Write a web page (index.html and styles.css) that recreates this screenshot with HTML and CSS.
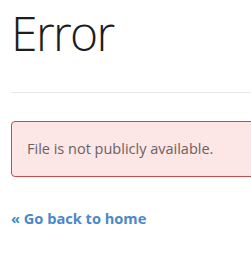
FILE: index.html
```html
<!DOCTYPE html>
<html>
<head>
<meta charset="utf-8">
<link rel="stylesheet" href="styles.css">
</head>
<body>
<div class="page">
  <h1 class="title">Error</h1>
  <hr class="rule">
  <div class="alert">File is not publicly available.</div>
  <a class="back" href="#">« Go back to home</a>
</div>
</body>
</html>
```

FILE: styles.css
```css
html, body {
  margin: 0;
  padding: 0;
  background: #fff;
}
body {
  font-family: "Open Sans", "Liberation Sans", sans-serif;
  color: #333;
  overflow: hidden;
}
.page {
  padding-left: 11px;
  display: flex;
  flex-direction: column;
  align-items: stretch;
  margin-right: -20px;
}
.title {
  margin: 7px 0 0;
  font-size: 48px;
  font-weight: 300;
  line-height: 1.1;
  letter-spacing: -1.6px;
  color: #1d1d1d;
}
.rule {
  margin: 32px 0 0;
  border: 0;
  border-top: 1px solid #e6e6e6;
  height: 0;
}
.alert {
  margin-top: 28px;
  padding: 17px 15px;
  font-size: 14.5px;
  line-height: 20px;
  color: #6b6262;
  background: #fde6e6;
  border: 1px solid #cd4a48;
  border-radius: 4px;
}
.back {
  margin-top: 31px;
  font-size: 14.6px;
  line-height: 20px;
  font-weight: 700;
  color: #4a88cc;
  text-decoration: none;
  align-self: flex-start;
}
```
